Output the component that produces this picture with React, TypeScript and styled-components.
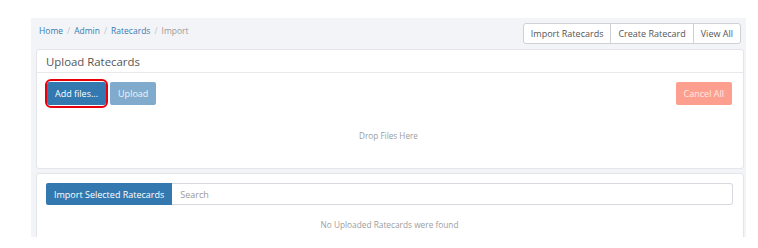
import { createGlobalStyle } from "styled-components";
import styled from "styled-components";

const GlobalStyle = createGlobalStyle`
  html, body {
    margin: 0;
    padding: 0;
    background: #ffffff;
    font-family: "Open Sans", "Liberation Sans", sans-serif;
  }
`;

const crumbs = ["Home", "Admin", "Ratecards"];
const actions = ["Import Ratecards", "Create Ratecard", "View All"];

function App() {
  return (
    <>
      <GlobalStyle />
      <Page>
        <Content>
          <TopBar>
            <Breadcrumb>
              {crumbs.map((c) => (
                <Crumb key={c}>
                  <CrumbLink>{c}</CrumbLink>
                  <Sep>/</Sep>
                </Crumb>
              ))}
              <Active>Import</Active>
            </Breadcrumb>
            <BtnGroup>
              {actions.map((a) => (
                <GroupBtn key={a}>{a}</GroupBtn>
              ))}
            </BtnGroup>
          </TopBar>

          <Card>
            <CardHeader>Upload Ratecards</CardHeader>
            <UploadBody>
              <Toolbar>
                <Highlight>
                  <Btn $variant="primary">Add files...</Btn>
                </Highlight>
                <Btn $variant="disabled">Upload</Btn>
                <Spacer />
                <Btn $variant="danger">Cancel All</Btn>
              </Toolbar>
              <DropZone>Drop Files Here</DropZone>
            </UploadBody>
          </Card>

          <Card>
            <ListBody>
              <InputGroup>
                <GroupAddonBtn>Import Selected Ratecards</GroupAddonBtn>
                <SearchInput placeholder="Search" />
              </InputGroup>
              <Empty>No Uploaded Ratecards were found</Empty>
            </ListBody>
          </Card>
        </Content>
      </Page>
    </>
  );
}

const Page = styled.div`
  padding: 18px 0 0 31px;
  width: 715px;
`;

const Content = styled.div`
  background: #f3f4f7;
  height: 219px;
  overflow: hidden;
  padding: 0 2px 0 5px;
  display: flex;
  flex-direction: column;
  gap: 4px;
`;

const TopBar = styled.div`
  display: flex;
  align-items: center;
  justify-content: space-between;
  flex-shrink: 0;
  height: 27px;
  padding: 4px 3px 0 3px;
  box-sizing: border-box;
`;

const Breadcrumb = styled.div`
  display: flex;
  align-items: center;
  font-size: 8.5px;
  margin-top: -6px;
`;

const Crumb = styled.span`
  display: inline-flex;
`;

const CrumbLink = styled.span`
  color: #3a7bb3;
`;

const Sep = styled.span`
  color: #c4c4c4;
  padding: 0 4px 0 4px;
`;

const Active = styled.span`
  color: #9a9a9a;
`;

const BtnGroup = styled.div`
  display: flex;
  border: 1px solid #cfd1d6;
  border-radius: 3px;
  background: #fff;
  height: 19px;
`;

const GroupBtn = styled.div`
  display: flex;
  align-items: center;
  padding: 0 7px 0 7px;
  font-size: 9px;
  color: #555;
  & + & {
    border-left: 1px solid #cfd1d6;
  }
`;

const Card = styled.div`
  background: #fff;
  border: 1px solid #e3e5ea;
  border-radius: 3px;
  flex-shrink: 0;
`;

const CardHeader = styled.div`
  height: 22px;
  display: flex;
  align-items: center;
  padding-left: 9px;
  font-size: 11.4px;
  color: #555;
  border-bottom: 1px solid #e6e8ec;
`;

const UploadBody = styled.div`
  padding: 6px 11px 0 8px;
  height: 89px;
`;

const Toolbar = styled.div`
  display: flex;
  align-items: center;
  gap: 2px;
`;

const Spacer = styled.div`
  flex: 1;
`;

const Highlight = styled.div`
  border: 2px solid #e8000b;
  border-radius: 6px;
  padding: 1px 0;
  display: flex;
`;

const variants = {
  primary: { bg: "#3379b0", color: "#fff" },
  disabled: { bg: "#80abcd", color: "#eef4f9" },
  danger: { bg: "#fd9f8e", color: "#fde9e5" },
};

const Btn = styled.div<{ $variant: keyof typeof variants }>`
  display: flex;
  align-items: center;
  justify-content: center;
  height: 23px;
  padding: 0 8px;
  border-radius: 2px;
  font-size: 9px;
  background: ${(p) => variants[p.$variant].bg};
  color: ${(p) => variants[p.$variant].color};
`;

const DropZone = styled.div`
  text-align: center;
  font-size: 8.2px;
  color: #9d9d9d;
  margin-top: 22px;
`;

const ListBody = styled.div`
  padding: 9px 10px 0 9px;
  height: 70px;
`;

const InputGroup = styled.div`
  display: flex;
  height: 22px;
`;

const GroupAddonBtn = styled.div`
  display: flex;
  align-items: center;
  padding: 0 8px;
  background: #3379b0;
  color: #fff;
  font-size: 9px;
  border-radius: 2px 0 0 2px;
  white-space: nowrap;
`;

const SearchInput = styled.input`
  flex: 1;
  border: 1px solid #d7d9de;
  border-left: none;
  border-radius: 0 3px 3px 0;
  padding: 0 8px;
  font-family: "Open Sans", "Liberation Sans", sans-serif;
  font-size: 9px;
  outline: none;
  &::placeholder {
    color: #999;
  }
`;

const Empty = styled.div`
  text-align: center;
  font-size: 8.3px;
  color: #9d9d9d;
  margin-top: 14px;
`;

export default App;
